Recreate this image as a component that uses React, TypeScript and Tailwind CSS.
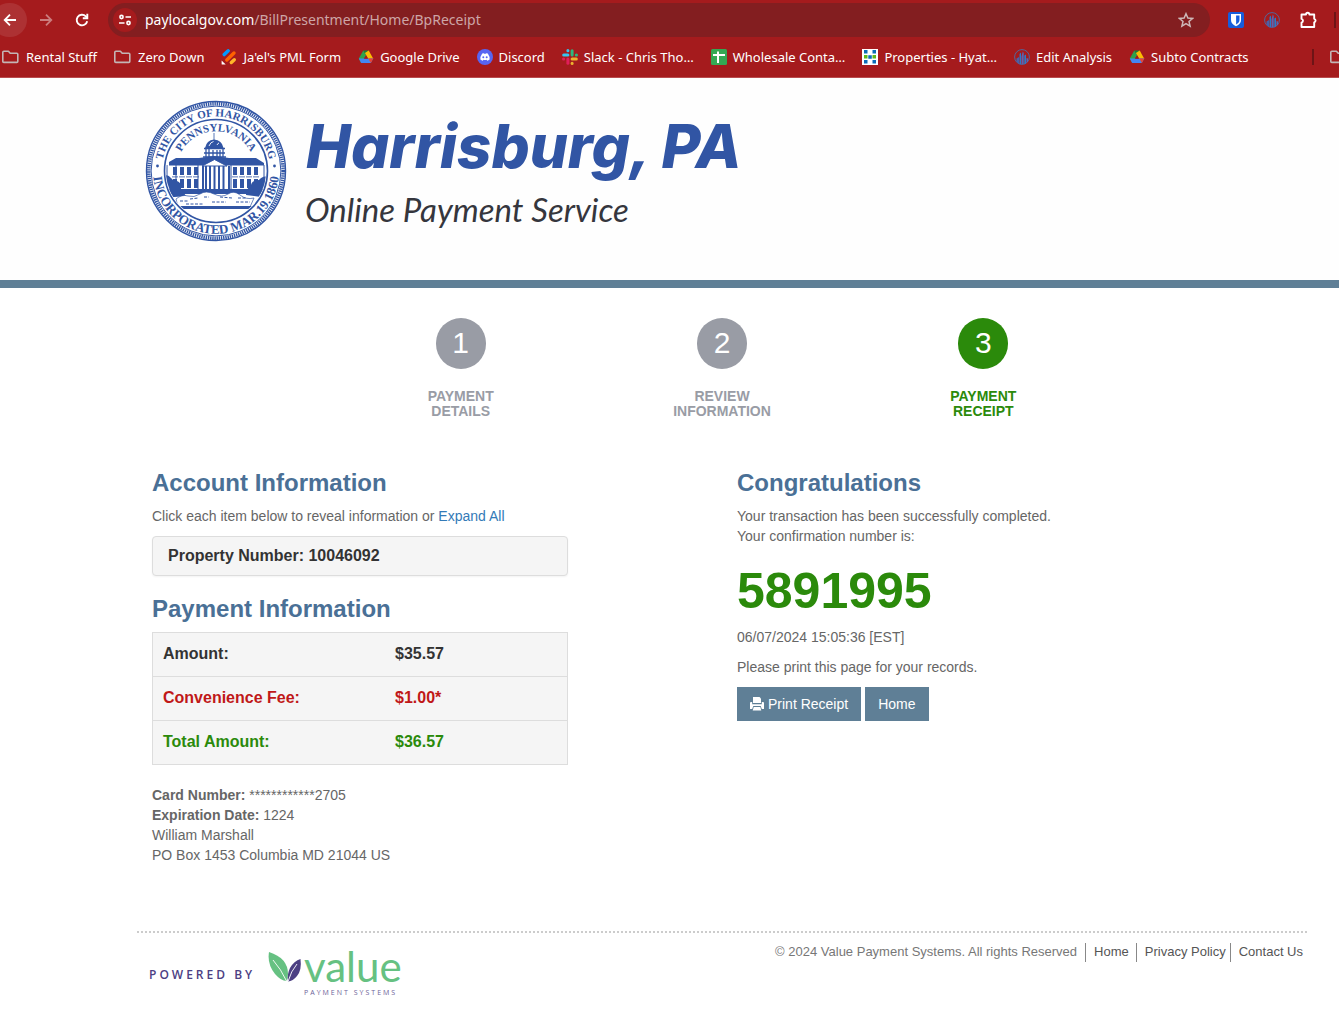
import React from "react";

const uiFont = "font-['Noto_Sans',sans-serif]";
const bodyFont = "font-['Liberation_Sans',Arial,sans-serif]";

function FolderIcon() {
  return (
    <svg viewBox="0 0 18 16" className="h-4 w-[18px] shrink-0" fill="none" stroke="#c4b5b5" strokeWidth="1.6" strokeLinejoin="round">
      <path d="M.8 3.2q0-1 1-1h4.6l1.8 2h6.6q1 0 1 1v7.2q0 1-1 1h-13q-1 0-1-1z" />
    </svg>
  );
}

function DriveIcon() {
  return (
    <svg viewBox="0 0 16 16" className="h-4 w-4 shrink-0">
      <path d="M5.3 1.5 .8 9.6 3.2 14l5-8.1z" fill="#2ea24c" />
      <path d="M5.3 1.5h5.4L8.2 5.9z" fill="#188038" />
      <path d="M10.7 1.5 15.3 9.8h-5L6.9 4z" fill="#fbbc04" />
      <path d="M.8 9.6h14.5L12.8 14H3.2z" fill="#4285f4" />
      <path d="M10.3 9.6h5L12.8 14z" fill="#ea4335" />
      <path d="M8 6.4 9.9 9.7H6z" fill="#a51b1d" />
    </svg>
  );
}

function FormIcon() {
  return (
    <svg viewBox="0 0 16 16" className="h-4 w-4 shrink-0" strokeLinecap="round" strokeWidth="3.4">
      <path d="M3.2 5.6 7.2 1.8" stroke="#0099ff" />
      <path d="M5.8 11 13 4" stroke="#ff6100" />
      <path d="M10.3 13.5 13.3 10.7" stroke="#ffb629" />
      <path d="M.6 11.4V15q0 .6.6.6h3.5z" fill="#fff" />
    </svg>
  );
}

function DiscordIcon() {
  return (
    <svg viewBox="0 0 16 16" className="h-4 w-4 shrink-0">
      <circle cx="8" cy="8" r="8" fill="#5865f2" />
      <path
        d="M5.2 4.6 6.8 4.2 7.2 4.8h1.6l.4-.6 1.6.4q2.100 3 1.800 6-1.100 1-2.400 1.200l-.6-1q-1.600.4-3.200 0l-.6 1q-1.300-.2-2.400-1.200-.3-3 1.800-6z"
        fill="#fff"
      />
      <circle cx="6.300" cy="8.300" r="1" fill="#5865f2" />
      <circle cx="9.700" cy="8.300" r="1" fill="#5865f2" />
    </svg>
  );
}

function SlackIcon() {
  return (
    <svg viewBox="0 0 16 16" className="h-4 w-4 shrink-0" strokeWidth="3" strokeLinecap="round">
      <path d="M1.700 5.900H5.900" stroke="#36c5f0" />
      <path d="M5.900 1.500V1.700" stroke="#36c5f0" />
      <path d="M10.100 1.700V5.900" stroke="#2eb67d" />
      <path d="M14.300 5.900H14.500" stroke="#2eb67d" />
      <path d="M10.100 10.100H14.300" stroke="#ecb22e" />
      <path d="M10.100 14.300V14.500" stroke="#ecb22e" />
      <path d="M5.900 10.100V14.300" stroke="#e01e5a" />
      <path d="M1.500 10.100H1.700" stroke="#e01e5a" />
    </svg>
  );
}

function SheetIcon() {
  return (
    <svg viewBox="0 0 16 16" className="h-4 w-4 shrink-0">
      <rect width="16" height="16" rx="1.500" fill="#34a853" />
      <path d="M2 6h12M7 2.500v11.500" stroke="#fff" strokeWidth="2" />
    </svg>
  );
}

function PropertiesIcon() {
  return (
    <svg viewBox="0 0 16 16" className="h-4 w-4 shrink-0">
      <rect width="16" height="16" fill="#fff" />
      <path d="M2 1h3.500v3.500H2zM10.500 1H14v3.500h-3.500zM2 11h3.500v3.500H2zM10.500 11H14v3.500h-3.500zM6.300 6.200h3.500v3.500H6.300z" fill="#0b6cb8" />
      <path d="M2 6h3.500v3.500H2zM10.500 6H14v3.500h-3.500z" fill="#5db81c" />
    </svg>
  );
}

function CityIcon() {
  return (
    <svg viewBox="0 0 16 16" className="h-4 w-4 shrink-0">
      <circle cx="8" cy="8" r="7.400" fill="none" stroke="#4a6ea8" strokeWidth=".9" />
      <path d="M2.500 9.500 5 8v6.800L2.500 13z" fill="#4a5fa8" />
      <path d="M5.500 5 7 3.500V15.300H5.500z" fill="#2a7bc8" />
      <path d="M7.500 7.500 8.800 2.500 9.700 4V15.300H7.500z" fill="#5a64b4" />
      <path d="M10.300 6.500 12 5.500V14.500l-1.700.7z" fill="#2a7bc8" />
      <path d="M12.500 9 14 9.500V12.500L12.500 14z" fill="#5a64b4" />
    </svg>
  );
}

const bookmarks: { label: string; icon: React.ReactNode }[] = [
  { label: "Rental Stuff", icon: <FolderIcon /> },
  { label: "Zero Down", icon: <FolderIcon /> },
  { label: "Ja'el's PML Form", icon: <FormIcon /> },
  { label: "Google Drive", icon: <DriveIcon /> },
  { label: "Discord", icon: <DiscordIcon /> },
  { label: "Slack - Chris Tho…", icon: <SlackIcon /> },
  { label: "Wholesale Conta…", icon: <SheetIcon /> },
  { label: "Properties - Hyat…", icon: <PropertiesIcon /> },
  { label: "Edit Analysis", icon: <CityIcon /> },
  { label: "Subto Contracts", icon: <DriveIcon /> },
];

function BrowserChrome() {
  return (
    <div className={`${uiFont} overflow-hidden border-b border-[#b94c4e] bg-[#a51b1d] text-white`}>
      <div className="flex h-10 items-center">
        <button aria-label="Back" className="-ml-2 flex h-[34px] w-[35px] shrink-0 items-center justify-center rounded-full bg-[#ad3133]">
          <svg viewBox="0 0 16 16" className="h-4 w-4" fill="none" stroke="#fff" strokeWidth="1.800">
            <path d="M14 8H3M8 2.700 2.700 8 8 13.300" />
          </svg>
        </button>
        <button aria-label="Forward" className="ml-[11px] shrink-0">
          <svg viewBox="0 0 16 16" className="h-4 w-4" fill="none" stroke="#cb7c7d" strokeWidth="1.800">
            <path d="M2 8h11M8 2.700 13.300 8 8 13.300" />
          </svg>
        </button>
        <button aria-label="Reload" className="ml-5 shrink-0">
          <svg viewBox="0 0 16 16" className="h-4 w-4" fill="none" stroke="#fff" strokeWidth="1.900">
            <path d="M13.200 9.200A5.300 5.300 0 1 1 11.800 4.300L13 5.500" />
            <path d="M13.300 1.800V6.300H8.800" />
          </svg>
        </button>
        <div className="ml-[18px] flex h-[34px] min-w-0 flex-1 items-center rounded-full bg-[#831e20] pr-4 pl-[5px]">
          <button aria-label="View site information" className="flex h-6 w-6 shrink-0 items-center justify-center rounded-full bg-[#a51b1d]">
            <svg viewBox="0 0 14 14" className="h-3.5 w-3.5" fill="none" stroke="#fff" strokeWidth="1.600">
              <circle cx="3.500" cy="4" r="1.600" />
              <path d="M7.500 4H13M1 10h5.500" />
              <circle cx="10.500" cy="10" r="1.600" />
            </svg>
          </button>
          <span className="ml-2 flex-1 truncate text-sm text-[#cda5a6]">
            <span className="text-white">paylocalgov.com</span>/BillPresentment/Home/BpReceipt
          </span>
          <button aria-label="Bookmark this page" className="shrink-0">
            <svg viewBox="0 0 16 16" className="h-4 w-4" fill="none" stroke="#cdb8b8" strokeWidth="1.500">
              <path d="M8 1.700 9.900 6l4.700.4-3.600 3.100 1.100 4.600L8 11.700l-4.100 2.400L5 9.500 1.400 6.400 6.100 6z" />
            </svg>
          </button>
        </div>
        <div className="ml-[18px] flex shrink-0 items-center gap-5">
          <svg viewBox="0 0 16 16" className="h-4 w-4">
            <rect width="16" height="16" rx="2" fill="#175ddc" />
            <path d="M3 2h10v6q0 4-5 6.300Q3 12 3 8z" fill="#fff" />
            <path d="M8.100 3.500h3.400V8q0 2.700-3.400 4.500z" fill="#175ddc" />
          </svg>
          <CityIcon />
          <svg viewBox="0 0 18 18" className="h-[18px] w-[18px]" fill="none" stroke="#fff" strokeWidth="1.900" strokeLinejoin="round">
            <path d="M1.500 3.500H6a1.700 1.700 0 0 1 3.400 0h4.800v4.300a1.800 1.800 0 0 1 0 3.500V16H1.500v-4.400a1.900 1.900 0 0 0 0-3.700z" />
          </svg>
        </div>
        <div className="mr-[3px] ml-4 h-4 w-[2px] shrink-0 bg-[#6e1416]" />
      </div>
      <div className="flex h-[37px] items-center pb-[3px] pl-0.5 text-[13px]">
        <nav aria-label="Bookmarks" className="flex flex-1 items-center gap-[17px]">
          {bookmarks.map((b) => (
            <a key={b.label} href="#" className="flex shrink-0 items-center gap-1.5 whitespace-nowrap">
              {b.icon}
              {b.label}
            </a>
          ))}
        </nav>
        <div className="h-4 w-[2px] shrink-0 bg-[#6e1416]" />
        <div className="ml-4 w-[9px] shrink-0 overflow-hidden">
          <FolderIcon />
        </div>
      </div>
    </div>
  );
}

function CitySeal() {
  const blue = "#3155a4";
  const windows = [-43, -36, -29, -22, 17, 24, 31, 38];
  return (
    <svg viewBox="-71 -71 142 142" className="h-[142px] w-[142px] shrink-0 not-italic" role="img" aria-label="Seal of the City of Harrisburg, Pennsylvania">
      <defs>
        <path id="seal-top" d="M-54.500 0A54.500 54.500 0 0 1 54.500 0" />
        <path id="seal-bottom" d="M-62.500 -8A63 63 0 1 0 62.500 -8" />
        <path id="seal-inner" d="M-39 6A39.500 39.500 0 1 1 39 6" />
        <clipPath id="seal-clip">
          <circle r="50" />
        </clipPath>
      </defs>
      <circle r="69.500" fill="#fff" stroke={blue} strokeWidth="1.400" />
      <circle r="67.200" fill="none" stroke={blue} strokeWidth="3.600" strokeDasharray="1.400 .8" />
      <circle r="64.900" fill="none" stroke={blue} strokeWidth="1" />
      <circle r="51.500" fill="none" stroke={blue} strokeWidth="1.600" />
      <g fill={blue} fontFamily="'Liberation Serif', serif" fontWeight="700" textAnchor="middle">
        <text fontSize="11">
          <textPath href="#seal-top" startOffset="50%">THE CITY OF HARRISBURG</textPath>
        </text>
        <text fontSize="13">
          <textPath href="#seal-bottom" startOffset="50%">INCORPORATED MAR.19.1860</textPath>
        </text>
        <text fontSize="11">
          <textPath href="#seal-inner" startOffset="50%">PENNSYLVANIA</textPath>
        </text>
      </g>
      <circle cx="-58.500" cy="-5" r="1.400" fill={blue} />
      <circle cx="58.500" cy="-5" r="1.400" fill={blue} />
      <g clipPath="url(#seal-clip)">
        <path d="M-2 -38V-29" stroke={blue} strokeWidth=".8" />
        <path d="M-11 -23Q-9.500 -31 -2 -31.500Q6 -31 7.500 -23z" fill={blue} />
        <path d="M-7 -25q1.500-4 4.500-4.500M1 -26q1-2 2-2" stroke="#fff" strokeWidth=".9" fill="none" />
        <path d="M-12 -22.500H9M-10 -22V-14M-7 -22V-14M-3 -21V-14M1 -21V-14M4 -21V-14M7 -22V-14M-13 -14H10M-12 -18H9" stroke={blue} strokeWidth="1.300" fill="none" />
        <path d="M-47 -9-40 -13H-17L-2 -15 13 -13H40L48 -8V-5.500H-47z" fill={blue} />
        <path d="M-14 -5-1.500 -11.500 11 -5z" fill="#fff" stroke={blue} strokeWidth="1" />
        <path d="M-49 -6V20M-40 -6V20M-18 -6V20M15 -6V20M48 -6V20" stroke={blue} strokeWidth="1" />
        {windows.map((x) => (
          <g key={x} fill={blue}>
            <rect x={x} y="-4" width="4" height="8" />
            <rect x={x} y="8" width="4" height="9" />
            <rect x={x - 1} y="5.500" width="6" height=".8" />
          </g>
        ))}
        <path d="M-49 18H-14V-5H-12V18H12V-5H14V18H49V23H-49z" fill={blue} />
        <path d="M-10 -5V19M-6 -5V19M-1.500 -5V19M3 -5V19M7.500 -5V19" stroke={blue} strokeWidth="2" />
        <path d="M-52 27V5q4-2 7 2t6 3q5 2 4 8l5 7zM52 27V6q-5-2-9 3-7 0-8 5-5 4-5 10z" fill={blue} />
        <path d="M-40 28q6-5 12-3t12-2 14 0 14 0 12 1 14 3l-4 9H-38z" fill="#fff" stroke={blue} strokeWidth=".7" />
        <path d="M-36 30h8M-26 28l8-1M-12 26h5M4 26l12 1M20 31h14M-30 33h18M-4 31h14M22 27h8" stroke={blue} strokeWidth="1" strokeDasharray="3 1.500" />
        <path d="M-46 35H46L42 38H-42z" fill={blue} />
      </g>
    </svg>
  );
}

const steps = [
  { n: 1, lines: ["PAYMENT", "DETAILS"], active: false },
  { n: 2, lines: ["REVIEW", "INFORMATION"], active: false },
  { n: 3, lines: ["PAYMENT", "RECEIPT"], active: true },
];

const amounts = [
  { label: "Amount:", value: "$35.57", color: "text-[#333333]" },
  { label: "Convenience Fee:", value: "$1.00*", color: "text-[#c01818]" },
  { label: "Total Amount:", value: "$36.57", color: "text-[#2b8a0b]" },
];

const sectionTitle = "text-2xl leading-[26px] font-bold text-[#4a7096]";

function ValueLogo() {
  return (
    <a href="#" aria-label="Value Payment Systems" className="flex">
      <svg viewBox="0 0 34 32" className="mt-3 h-8 w-[34px] shrink-0">
        <path d="M1 0Q20 6 20 22 20 26 18.500 29 13 29 7 22 -1 12 1 0z" fill="#66c182" />
        <path d="M32.500 7Q34 18 29 24 25 29 20 29.500 19 22 22 16 26 9 32.500 7z" fill="#4c4083" />
        <path d="M5 8Q13 17 18.800 29.500M29 12Q23 19 20 29.500" fill="none" stroke="#fff" strokeWidth=".9" />
      </svg>
      <span className="flex flex-col pl-0.5">
        <span className="h-[45px] font-['Lato',sans-serif] text-[42px] leading-[52px] text-[#66c182]">value</span>
        <span className="font-['Open_Sans',sans-serif] text-[7px] leading-4 tracking-[2px] text-[#6d6399]">PAYMENT SYSTEMS</span>
      </span>
    </a>
  );
}

export default function App() {
  return (
    <div className={`${bodyFont} min-h-screen overflow-x-hidden bg-white text-sm leading-5 text-[#666666]`}>
      <BrowserChrome />

      <header className="border-b-8 border-[#5f7f96] bg-[#fefefe] pt-[22px] pb-[38px] pl-[145px]">
        <div className="flex gap-[18px] italic">
          <CitySeal />
          <div className="pt-1.5">
            <h1 className="pl-px font-['Inter',sans-serif] text-[60px] leading-[80px] font-extrabold whitespace-nowrap text-[#3155a4]">Harrisburg, PA</h1>
            <p className="font-['Lato',sans-serif] text-[33px] leading-[46px] whitespace-nowrap text-[#35363d]">Online Payment Service</p>
          </div>
        </div>
      </header>

      <div className="pr-8 pl-[137px]">
        <ol className="mx-auto grid w-[67%] grid-cols-3 pt-[30px]">
          {steps.map((s) => (
            <li
              key={s.n}
              className={`flex flex-col items-center text-center leading-[15px] font-bold ${s.active ? "text-[#2b8a0b]" : "text-[#999ca5]"}`}
            >
              <span
                className={`mb-5 flex h-[51px] w-[50px] items-center justify-center rounded-full pb-0.5 text-3xl font-normal text-white ${s.active ? "bg-[#2b8a0b]" : "bg-[#999ca5]"}`}
              >
                {s.n}
              </span>
              <span>{s.lines[0]}</span>
              <span>{s.lines[1]}</span>
            </li>
          ))}
        </ol>

        <main className="grid grid-cols-2 pt-[51px]">
          <section className="px-[15px]">
            <div className="w-3/4">
              <h2 className={sectionTitle}>Account Information</h2>
              <p className="mt-2.5">
                Click each item below to reveal information or{" "}
                <a href="#" className="text-[#337ab7]">Expand All</a>
              </p>
              <button className="mt-2.5 block h-10 w-full rounded border border-[#dddddd] bg-[#f5f5f5] px-[15px] text-left text-base leading-[38px] font-bold text-[#333333] shadow-xs">
                Property Number: 10046092
              </button>
              <h2 className={`${sectionTitle} mt-5`}>Payment Information</h2>
              <table className="mt-2.5 w-full table-fixed border-collapse bg-[#f5f5f5] text-base leading-[23px] font-bold">
                <tbody>
                  {amounts.map((a) => (
                    <tr key={a.label} className={`border border-[#dddddd] ${a.color}`}>
                      <th scope="row" className="w-[56%] px-2.5 pt-[9px] pb-[11px] text-left">{a.label}</th>
                      <td className="px-2.5 pt-[9px] pb-[11px]">{a.value}</td>
                    </tr>
                  ))}
                </tbody>
              </table>
              <address className="mt-5 not-italic">
                <b>Card Number:</b> ************2705
                <br />
                <b>Expiration Date:</b> 1224
                <br />
                William Marshall
                <br />
                PO Box 1453 Columbia MD 21044 US
              </address>
            </div>
          </section>

          <section className="px-[15px]">
            <h2 className={sectionTitle}>Congratulations</h2>
            <p className="mt-2.5">
              Your transaction has been successfully completed.
              <br />
              Your confirmation number is:
            </p>
            <p className="mt-[18px] text-[50px] leading-[55px] font-bold text-[#2b8a0b]">5891995</p>
            <p className="mt-2">06/07/2024 15:05:36 [EST]</p>
            <p className="mt-2.5">Please print this page for your records.</p>
            <div className="mt-2.5 flex gap-1 text-white">
              <button className="flex h-[34px] items-center gap-1 bg-[#5f7f96] px-[13px]">
                <svg viewBox="0 0 14 14" className="h-3.5 w-3.5" fill="#fff">
                  <path d="M3 0h6.500L11 1.500V6H3z" />
                  <path d="M0 6q0-1 1-1h1.200v2.200h9.600V5H13q1 0 1 1v6h-2.200L10.700 9H3.300l-1.100 3H0z" />
                  <path d="M3.700 10h6.600l1 3.500H2.700z" />
                </svg>
                Print Receipt
              </button>
              <button className="h-[34px] bg-[#5f7f96] px-[13px]">Home</button>
            </div>
          </section>
        </main>

        <footer className="mt-[66px] flex justify-between border-t-2 border-dotted border-[#cccccc]">
          <div className="flex pt-[7px] pl-3">
            <span className="w-[119px] pt-[27px] font-['Open_Sans',sans-serif] text-xs font-semibold tracking-[3px] whitespace-nowrap text-[#4c4083]">
              POWERED BY
            </span>
            <ValueLogo />
          </div>
          <nav aria-label="Footer" className="flex items-start pt-2.5 pr-1 text-[13px] leading-[18px] text-[#555555]">
            <span className="pr-2 text-[#777777]">© 2024 Value Payment Systems. All rights Reserved</span>
            <a href="#" className="border-l border-[#888888] pr-[7px] pb-px pl-2">Home</a>
            <a href="#" className="border-l border-[#888888] pr-1 pb-px pl-2">Privacy Policy</a>
            <a href="#" className="border-l border-[#888888] pb-px pl-2">Contact Us</a>
          </nav>
        </footer>
      </div>
    </div>
  );
}
